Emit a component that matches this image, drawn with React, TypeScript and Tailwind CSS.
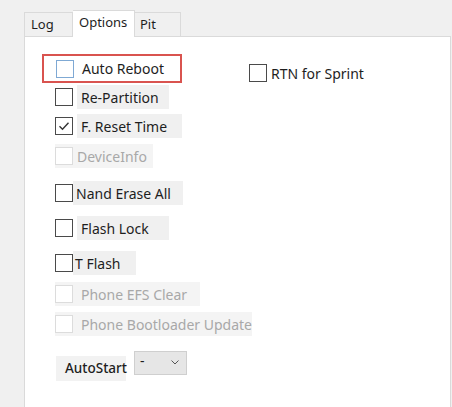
import React from 'react';

interface Opt {
  label: string;
  checked?: boolean;
  disabled?: boolean;
  row: string;
  wrap: string;
  lbl: string;
}

const Box = ({ checked, disabled, hover }: { checked?: boolean; disabled?: boolean; hover?: boolean }) => {
  const border = disabled ? 'border-[#dcdcdc]' : hover ? 'border-[#7fa9d4]' : 'border-[#4a4a4a]';
  return (
    <div className={`w-[18px] h-[18px] shrink-0 border bg-white flex items-center justify-center ${border}`}>
      {checked && (
        <svg width="14" height="14" viewBox="0 0 14 14" fill="none">
          <path d="M2.5 7.2l3 3 6-6.5" stroke="#333" strokeWidth="1.4" />
        </svg>
      )}
    </div>
  );
};

const opts: Opt[] = [
  { label: 'Re-Partition', row: 'mt-[2px]', wrap: '', lbl: 'ml-[4px] pl-[4px] w-[92px] bg-[#f0f0f0]' },
  { label: 'F. Reset Time', checked: true, row: 'mt-[5px]', wrap: '', lbl: 'ml-[4px] pl-[4px] w-[105px] bg-[#f0f0f0]' },
  { label: 'DeviceInfo', disabled: true, row: 'mt-[6px]', wrap: 'w-[98px] bg-[#f4f4f4]', lbl: 'ml-[4px]' },
  { label: 'Nand Erase All', row: 'mt-[13px]', wrap: '', lbl: 'pl-[3px] w-[110px] bg-[#f0f0f0]' },
  { label: 'Flash Lock', row: 'mt-[11px]', wrap: '', lbl: 'ml-[4px] pl-[4px] w-[92px] bg-[#f0f0f0]' },
  { label: 'T Flash', row: 'mt-[11px]', wrap: '', lbl: 'pl-[2px] w-[63px] bg-[#f0f0f0]' },
  { label: 'Phone EFS Clear', disabled: true, row: 'mt-[7px]', wrap: 'w-[145px] bg-[#f4f4f4]', lbl: 'ml-[8px]' },
  { label: 'Phone Bootloader Update', disabled: true, row: 'mt-[6px]', wrap: 'w-[205px] bg-[#f4f4f4]', lbl: 'ml-[8px]' },
];

const App = () => {
  return (
    <div
      className="w-[452px] h-[407px] overflow-hidden bg-[#f0f0f0] flex flex-col text-[13px] text-[#1e1e1e]"
      style={{ fontFamily: '"Noto Sans", "Open Sans", sans-serif' }}
    >
      {/* tabs */}
      <div className="flex items-end pl-[24px] h-[36px] pt-[9px]">
        <div className="w-[49px] h-[24px] border border-b-0 border-[#dadada] bg-[#f0f0f0] pl-[6px] leading-[22px]">Log</div>
        <div className="w-[62px] h-[27px] border border-b-0 border-l-0 border-[#dadada] bg-white pl-[6px] leading-[22px] relative z-10 -mb-px">
          Options
        </div>
        <div className="w-[46px] h-[24px] border border-b-0 border-l-0 border-[#dadada] bg-[#f0f0f0] pl-[5px] leading-[22px]">Pit</div>
      </div>

      {/* panel */}
      <div className="ml-[24px] mr-px flex-1 bg-white border-l border-t border-r border-[#dadada] flex pl-[17px] pt-[17px] text-[14px]">
        <div className="flex flex-col w-[190px]">
          <div className="w-[140px] h-[29px] border-2 border-[#d9534f] flex items-center pl-[12px]">
            <Box hover />
            <span className="ml-[8px]">Auto Reboot</span>
          </div>
          {opts.map((o) => (
            <div key={o.label} className={`flex pl-[13px] h-[24px] ${o.row}`}>
              <div className={`flex items-center h-[24px] ${o.wrap}`}>
                <Box checked={o.checked} disabled={o.disabled} />
                <div className={`h-[24px] flex items-center whitespace-nowrap ${o.lbl} ${o.disabled ? 'text-[#a8a8a8]' : ''}`}>
                  {o.label}
                </div>
              </div>
            </div>
          ))}
          <div className="flex items-start mt-[15px] pl-[14px]">
            <div className="mt-[5px] w-[70px] h-[25px] bg-[#f2f2f2] flex items-center pl-[9px] font-medium text-[13.5px]">AutoStart</div>
            <div className="ml-[8px] w-[53px] h-[24px] bg-[#e6e6e6] border border-[#cfcfcf] flex items-start pl-[5px] justify-between pr-[6px]">
              <span className="leading-[18px]">-</span>
              <svg width="10" height="10" viewBox="0 0 10 10" className="mt-[5px]" fill="none">
                <path d="M1.5 3.5l3.5 3.5 3.5-3.5" stroke="#555" strokeWidth="1" />
              </svg>
            </div>
          </div>
        </div>
        <div className="flex items-center mt-[10px] h-[18px] ml-[17px]">
          <Box />
          <span className="ml-[4px] whitespace-nowrap">RTN for Sprint</span>
        </div>
      </div>
    </div>
  );
};

export default App;
